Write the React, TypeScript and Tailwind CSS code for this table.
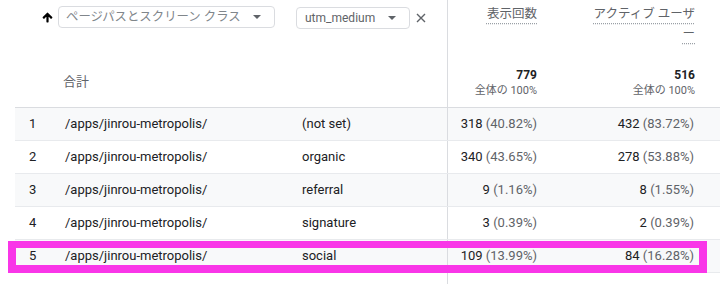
import React from "react";

const rows = [
  { n: 1, path: "/apps/jinrou-metropolis/", med: "(not set)", v: "318", vp: "(40.82%)", u: "432", up: "(83.72%)" },
  { n: 2, path: "/apps/jinrou-metropolis/", med: "organic", v: "340", vp: "(43.65%)", u: "278", up: "(53.88%)" },
  { n: 3, path: "/apps/jinrou-metropolis/", med: "referral", v: "9", vp: "(1.16%)", u: "8", up: "(1.55%)" },
  { n: 4, path: "/apps/jinrou-metropolis/", med: "signature", v: "3", vp: "(0.39%)", u: "2", up: "(0.39%)" },
  { n: 5, path: "/apps/jinrou-metropolis/", med: "social", v: "109", vp: "(13.99%)", u: "84", up: "(16.28%)" },
];

function Caret() {
  return (
    <svg width="8" height="4" viewBox="0 0 8 4" className="shrink-0">
      <path d="M0 0 L8 0 L4 4 Z" fill="#5f6368" />
    </svg>
  );
}

export default function App() {
  return (
    <div
      className="relative w-[720px] h-[284px] overflow-hidden bg-white text-[#202124]"
      style={{ fontFamily: "Roboto, 'Noto Sans CJK JP', sans-serif" }}
    >
      <div className="ml-[15px]">
        {/* header */}
        <div className="flex h-[108px] border-b border-[#dadce0]">
          <div className="w-[432px] flex flex-col pt-[6px]">
            <div className="flex items-center h-[22px]">
              <svg width="13" height="13" viewBox="0 0 24 24" className="ml-[26px] shrink-0">
                <path
                  d="M4 12l1.41 1.41L11 7.83V20h2V7.83l5.58 5.59L20 12l-8-8-8 8z"
                  fill="#000"
                  stroke="#000"
                  strokeWidth="2"
                  strokeLinejoin="round"
                />
              </svg>
              <div className="ml-[4px] w-[217px] h-[22px] rounded-[4px] border border-[#dadce0] flex items-center pl-[7px] pr-[13px] justify-between">
                <span className="text-[12.4px] text-[#80868b] leading-none">ページパスとスクリーン クラス</span>
                <Caret />
              </div>
              <div className="ml-[21px] mt-[2px] w-[114px] h-[22px] rounded-[4px] border border-[#dadce0] flex items-center pl-[8px] pr-[13px] justify-between">
                <span className="text-[12px] text-[#5f6368] leading-none">utm_medium</span>
                <Caret />
              </div>
              <svg width="10" height="10" viewBox="0 0 10 10" className="ml-[6px] mt-[2px] shrink-0">
                <path d="M1 1 L9 9 M9 1 L1 9" stroke="#5f6368" strokeWidth="1.4" />
              </svg>
            </div>
            <div className="mt-[45px] pl-[48px] text-[13px] leading-[18px] text-[#5f6368]">合計</div>
          </div>
          <div className="w-[106px] border-l border-[#dadce0] flex flex-col items-end justify-between pr-[16px] pt-[4px] pb-[8px]">
            <div className="text-[12.5px] leading-[20px] text-[#5f6368] underline decoration-dotted decoration-[#9aa0a6] underline-offset-[5px]">
              表示回数
            </div>
            <div className="flex flex-col items-end">
              <div className="text-[12px] leading-[16px] font-bold text-[#202124]">779</div>
              <div className="text-[11px] leading-[16px] text-[#5f6368]">全体の 100%</div>
            </div>
          </div>
          <div className="flex-1 flex flex-col items-end justify-between pr-[25px] pt-[4px] pb-[8px]">
            <div className="flex flex-col items-end text-[12.5px] leading-[20px] text-[#5f6368]">
              <span className="underline decoration-dotted decoration-[#9aa0a6] underline-offset-[5px]">アクティブ ユーザ</span>
              <span className="underline decoration-dotted decoration-[#9aa0a6] underline-offset-[5px]">ー</span>
            </div>
            <div className="flex flex-col items-end">
              <div className="text-[12px] leading-[16px] font-bold text-[#202124]">516</div>
              <div className="text-[11px] leading-[16px] text-[#5f6368]">全体の 100%</div>
            </div>
          </div>
        </div>

        {/* rows */}
        {rows.map((r, i) => (
          <div
            key={r.n}
            className={
              "flex h-[33px] border-b border-[#e8eaed] text-[13px] " +
              (i % 2 === 0 ? "bg-[#f8f9fa]" : "bg-white")
            }
          >
            <div className="w-[432px] flex items-center">
              <div className="w-[50px] pl-[14px]">{r.n}</div>
              <div className="w-[237px]">{r.path}</div>
              <div className="flex-1">{r.med}</div>
            </div>
            <div className="w-[106px] border-l border-[#dadce0] flex items-center justify-end pr-[16px] whitespace-pre">
              <span>{r.v}</span>
              <span className="text-[#5f6368]"> {r.vp}</span>
            </div>
            <div className="flex-1 flex items-center justify-end pr-[26px] whitespace-pre">
              <span>{r.u}</span>
              <span className="text-[#5f6368]"> {r.up}</span>
            </div>
          </div>
        ))}
        <div className="flex h-[20px]">
          <div className="w-[432px]" />
          <div className="w-[106px] border-l border-[#dadce0]" />
        </div>
      </div>

      {/* highlight annotation */}
      <div className="absolute left-[8px] top-[241px] w-[699px] h-[32px] border-x-[8px] border-t-[7px] border-b-[8px] border-[#f936e8]" />
    </div>
  );
}
